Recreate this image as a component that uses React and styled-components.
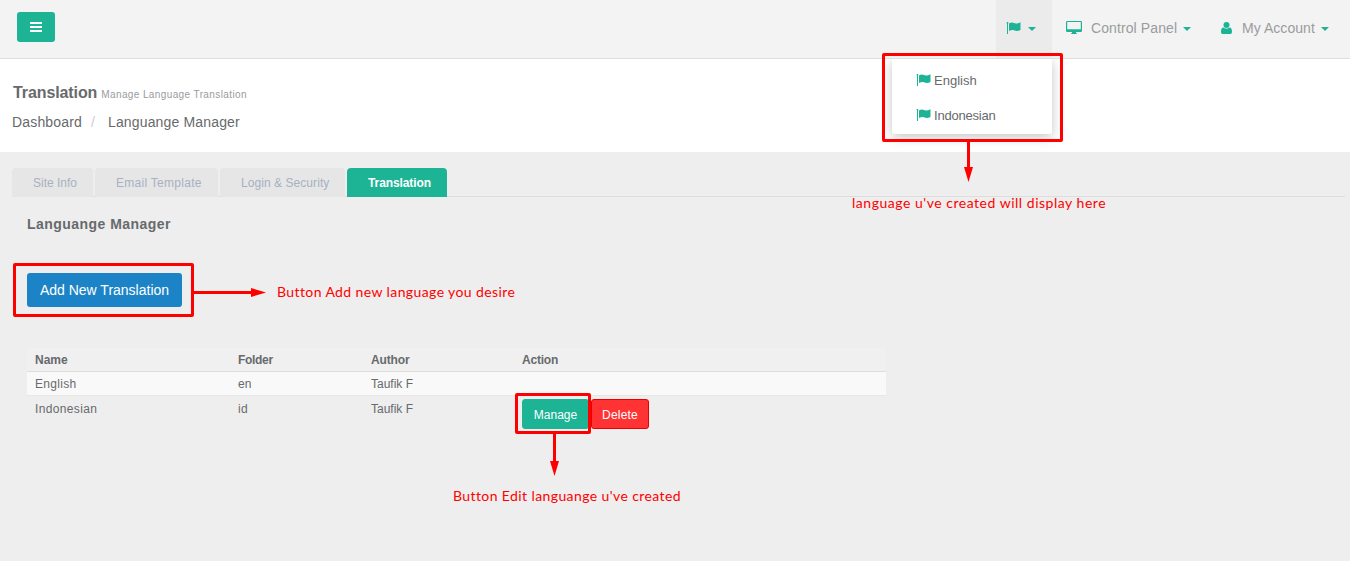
import React from "react";
import styled, { createGlobalStyle } from "styled-components";

const GREEN = "#1cb495";
const RED = "#ff0000";

const GlobalStyle = createGlobalStyle`
  * { box-sizing: border-box; }
  body {
    margin: 0;
    background: #eeeeee;
    color: #676a6c;
    font-family: "Liberation Sans", Arial, sans-serif;
    font-size: 12px;
  }
`;

const Page = styled.div`
  position: relative;
  width: 1350px;
  height: 561px;
  overflow: hidden;
  background: #eeeeee;
`;

const Navbar = styled.header`
  display: flex;
  justify-content: space-between;
  height: 59px;
  padding-left: 17px;
  background: #f3f3f3;
  border-bottom: 1px solid #dedede;
`;

const MenuButton = styled.button`
  display: flex;
  align-items: center;
  justify-content: center;
  width: 38px;
  height: 30px;
  margin-top: 12px;
  padding: 0;
  border: 0;
  border-radius: 3px;
  background: ${GREEN};
`;

const NavLinks = styled.nav`
  display: flex;
  height: 58px;
`;

const NavItem = styled.div`
  position: relative;
  display: flex;
  align-items: center;
  width: ${(p) => p.$width}px;
  padding: 0 0 2px ${(p) => p.$pad}px;
  background: ${(p) => (p.$active ? "#ebebeb" : "transparent")};
`;

const NavText = styled.span`
  margin-left: ${(p) => p.$gap}px;
  font-size: 14px;
  line-height: 20px;
  letter-spacing: ${(p) => p.$spacing}px;
  color: #999c9e;
  white-space: nowrap;
`;

const Caret = styled.span`
  margin: 2px 0 0 ${(p) => p.$gap}px;
  border-top: 4px solid ${GREEN};
  border-left: 4px solid transparent;
  border-right: 4px solid transparent;
`;

const LanguageMenu = styled.div`
  position: absolute;
  z-index: 2;
  top: 59px;
  right: 0;
  width: 160px;
  height: 75px;
  padding: 4px 0 0 24px;
  background: #ffffff;
  border-radius: 0 0 2px 2px;
  box-shadow: 0 3px 12px rgba(90, 90, 90, 0.35);
  clip-path: inset(0 -20px -20px -20px);
`;

const MenuEntry = styled.div`
  display: flex;
  align-items: center;
  height: 35px;
  gap: 3px;
  font-size: 13px;
  letter-spacing: ${(p) => p.$spacing || 0}px;
  color: #676a6c;

  svg {
    margin-top: -1px;
  }
`;

const Heading = styled.section`
  height: 93px;
  padding: 24px 0 0 12px;
  background: #ffffff;
`;

const TitleRow = styled.div`
  display: flex;
  align-items: baseline;
  gap: 4px;
  height: 29px;
  padding-left: 1px;
`;

const Title = styled.h1`
  margin: 0;
  font-size: 16px;
  line-height: 20px;
  letter-spacing: -0.1px;
  color: #676a6c;
`;

const Subtitle = styled.small`
  font-size: 10px;
  letter-spacing: 0.39px;
  color: #999c9e;
`;

const Breadcrumb = styled.div`
  display: flex;
  font-size: 14px;
  line-height: 20px;
  letter-spacing: 0.16px;
`;

const Slash = styled.span`
  width: 26px;
  padding-left: 9px;
  color: #cccccc;
`;

const Tabs = styled.div`
  display: flex;
  gap: 2px;
  height: 45px;
  margin: 0 5px 0 12px;
  padding-top: 16px;
  border-bottom: 1px solid #dddddd;
`;

const Tab = styled.div`
  width: ${(p) => p.$width}px;
  height: 29px;
  padding-left: 21px;
  border-radius: 4px 4px 0 0;
  background: ${(p) => (p.$active ? GREEN : "#e6e6e6")};
  color: ${(p) => (p.$active ? "#ffffff" : "#a7b1c2")};
  font-weight: ${(p) => (p.$active ? 700 : 400)};
  line-height: 30px;
  letter-spacing: ${(p) => p.$spacing || 0}px;
  white-space: nowrap;
`;

const Panel = styled.main`
  width: 886px;
  padding: 17px 0 0 27px;
`;

const PanelTitle = styled.h2`
  margin: 0 0 39px;
  font-size: 14px;
  line-height: 20px;
  letter-spacing: 0.46px;
`;

const AddButton = styled.button`
  display: block;
  width: 155px;
  height: 34px;
  margin: 0 0 41px;
  padding: 0;
  border: 0;
  border-radius: 3px;
  background: #1c84c6;
  color: #ffffff;
  font: 14px/34px "Liberation Sans", Arial, sans-serif;
`;

const Table = styled.div`
  width: 859px;
`;

const Row = styled.div`
  display: grid;
  grid-template-columns: 203px 133px 151px 1fr;
  height: ${(p) => p.$height}px;
  padding: 4px 8px 0;
  background: ${(p) => p.$bg || "transparent"};
  border-bottom: ${(p) => (p.$line ? `1px solid ${p.$line}` : "0")};
  font-weight: ${(p) => (p.$head ? 700 : 400)};
  line-height: 17px;
`;

const Cell = styled.span`
  padding-top: ${(p) => p.$drop || 0}px;
  letter-spacing: ${(p) => p.$spacing || 0}px;
`;

const Actions = styled.div`
  display: flex;
  gap: 2px;
  margin-top: -1px;
`;

const ActionButton = styled.button`
  width: ${(p) => p.$width}px;
  height: 30px;
  padding: 0;
  border: 1px solid ${(p) => p.$border};
  border-radius: 3px;
  background: ${(p) => p.$bg};
  color: #ffffff;
  font: 12px/30px "Liberation Sans", Arial, sans-serif;
  letter-spacing: ${(p) => p.$spacing || 0}px;
`;

const Callout = styled.div`
  position: absolute;
  z-index: 3;
  left: ${(p) => p.$x}px;
  top: ${(p) => p.$y}px;
  width: ${(p) => p.$w}px;
  height: ${(p) => p.$h}px;
  border: 3px solid ${RED};
  border-radius: 2px;
`;

const Arrow = styled.svg`
  position: absolute;
  z-index: 3;
  left: ${(p) => p.$x}px;
  top: ${(p) => p.$y}px;
  fill: ${RED};
`;

const Note = styled.div`
  position: absolute;
  z-index: 3;
  left: ${(p) => p.$x}px;
  top: ${(p) => p.$y}px;
  color: ${RED};
  font-family: Lato, "Open Sans", sans-serif;
  font-size: 14px;
  line-height: 20px;
  letter-spacing: ${(p) => p.$spacing}px;
  white-space: nowrap;
`;

const FlagIcon = () => (
  <svg width="15" height="14" viewBox="0 0 15 14" fill={GREEN}>
    <rect x="1" y="1" width="1" height="12" />
    <rect x="0.5" y="1" width="2" height="1.5" opacity="0.6" />
    <path d="M3 2.600C4 1.900 5 1.600 6 1.600c1.600 0 2.400.900 4 .900 1.500 0 2.700-.600 3.800-1.100q.700-.200.700.500v6.600q0 .500-.500.700C12.900 9.700 12 10 10.800 10 9.200 10 8.300 9 6.600 9 5.300 9 4.200 9.400 3 10Z" />
  </svg>
);

const DesktopIcon = () => (
  <svg width="16" height="14" viewBox="0 0 16 14" fill={GREEN}>
    <path fillRule="evenodd" d="M1.200 0h13.600Q16 0 16 1.200v8.600Q16 11 14.800 11H10v1l1 .500V13H5v-.500L6 12V11H1.200Q0 11 0 9.800V1.200Q0 0 1.200 0ZM1.200 1v7.300h13.600V1Z" />
  </svg>
);

const UserIcon = () => (
  <svg width="12" height="14" viewBox="0 0 12 14" fill={GREEN}>
    <circle cx="6.500" cy="4" r="3" />
    <path d="M3.500 6.500C1.700 6.500 1 8.500 1 10.700 1 12.100 1.700 13 3.100 13h6.800c1.400 0 2.100-.900 2.100-2.300 0-2.200-.700-4.200-2.500-4.200-.8.700-1.800 1.200-3 1.200s-2.200-.5-3-1.200Z" />
  </svg>
);

const BarsIcon = () => (
  <svg width="12" height="10" viewBox="0 0 12 10" fill="#ffffff">
    <rect width="12" height="2" />
    <rect y="4" width="12" height="2" />
    <rect y="8" width="12" height="2" />
  </svg>
);

const DownArrow = ({ x, y, length }) => (
  <Arrow $x={x} $y={y} width="11" height={length} viewBox={`0 0 11 ${length}`}>
    <rect x="4" width="3" height={length - 12} />
    <path d={`M1 ${length - 15}h9L5.5 ${length}Z`} />
  </Arrow>
);

const RightArrow = ({ x, y, length }) => (
  <Arrow $x={x} $y={y} width={length} height="11" viewBox={`0 0 ${length} 11`}>
    <rect y="4" width={length - 12} height="3" />
    <path d={`M${length - 15} 1v9L${length} 5.5Z`} />
  </Arrow>
);

export default function App() {
  return (
    <Page>
      <GlobalStyle />
      <Navbar>
        <MenuButton aria-label="Menu"><BarsIcon /></MenuButton>
        <NavLinks>
          <NavItem $width={56} $pad={10} $active>
            <FlagIcon />
            <Caret $gap={7} />
            <LanguageMenu>
              <MenuEntry><FlagIcon />English</MenuEntry>
              <MenuEntry $spacing={-0.2}><FlagIcon />Indonesian</MenuEntry>
            </LanguageMenu>
          </NavItem>
          <NavItem $width={154} $pad={14}>
            <DesktopIcon />
            <NavText $gap={9} $spacing={0.1}>Control Panel</NavText>
            <Caret $gap={6} />
          </NavItem>
          <NavItem $width={144} $pad={14}>
            <UserIcon />
            <NavText $gap={10} $spacing={0.05}>My Account</NavText>
            <Caret $gap={6} />
          </NavItem>
        </NavLinks>
      </Navbar>
      <Heading>
        <TitleRow>
          <Title>Translation</Title>
          <Subtitle>Manage Language Translation</Subtitle>
        </TitleRow>
        <Breadcrumb>
          <span>Dashboard</span><Slash>/</Slash><span>Languange Manager</span>
        </Breadcrumb>
      </Heading>
      <Tabs>
        <Tab $width={81}>Site Info</Tab>
        <Tab $width={123} $spacing={0.28}>Email Template</Tab>
        <Tab $width={125} $spacing={0.06}>Login &amp; Security</Tab>
        <Tab $width={100} $spacing={-0.1} $active>Translation</Tab>
      </Tabs>
      <Panel>
        <PanelTitle>Languange Manager</PanelTitle>
        <AddButton>Add New Translation</AddButton>
        <Table>
          <Row $height={24} $bg="#f0f0f0" $line="#dddddd" $head>
            <Cell>Name</Cell>
            <Cell $spacing={-0.3}>Folder</Cell>
            <Cell $spacing={-0.15}>Author</Cell>
            <Cell $spacing={-0.2}>Action</Cell>
          </Row>
          <Row $height={24} $bg="#f9f9f9" $line="#e7e7e7">
            <Cell $spacing={0.3}>English</Cell>
            <Cell>en</Cell>
            <Cell>Taufik F</Cell>
            <Cell />
          </Row>
          <Row $height={38}>
            <Cell $drop={1} $spacing={0.35}>Indonesian</Cell>
            <Cell $drop={1} $spacing={0.3}>id</Cell>
            <Cell $drop={1}>Taufik F</Cell>
            <Actions>
              <ActionButton $width={67} $bg={GREEN} $border={GREEN}>Manage</ActionButton>
              <ActionButton $width={58} $bg="#ff3333" $border="#e60000" $spacing={0.2}>Delete</ActionButton>
            </Actions>
          </Row>
        </Table>
      </Panel>

      <Callout $x={882} $y={53} $w={181} $h={89} />
      <DownArrow x={963} y={142} length={40} />
      <Note $x={852} $y={193} $spacing={0.52}>language u've created will display here</Note>

      <Callout $x={13} $y={263} $w={181} $h={54} />
      <RightArrow x={194} y={287} length={72} />
      <Note $x={277} $y={282} $spacing={0.4}>Button Add new language you desire</Note>

      <Callout $x={515} $y={393} $w={76} $h={41} />
      <DownArrow x={549} y={434} length={42} />
      <Note $x={453} $y={486} $spacing={0.4}>Button Edit languange u've created</Note>
    </Page>
  );
}
